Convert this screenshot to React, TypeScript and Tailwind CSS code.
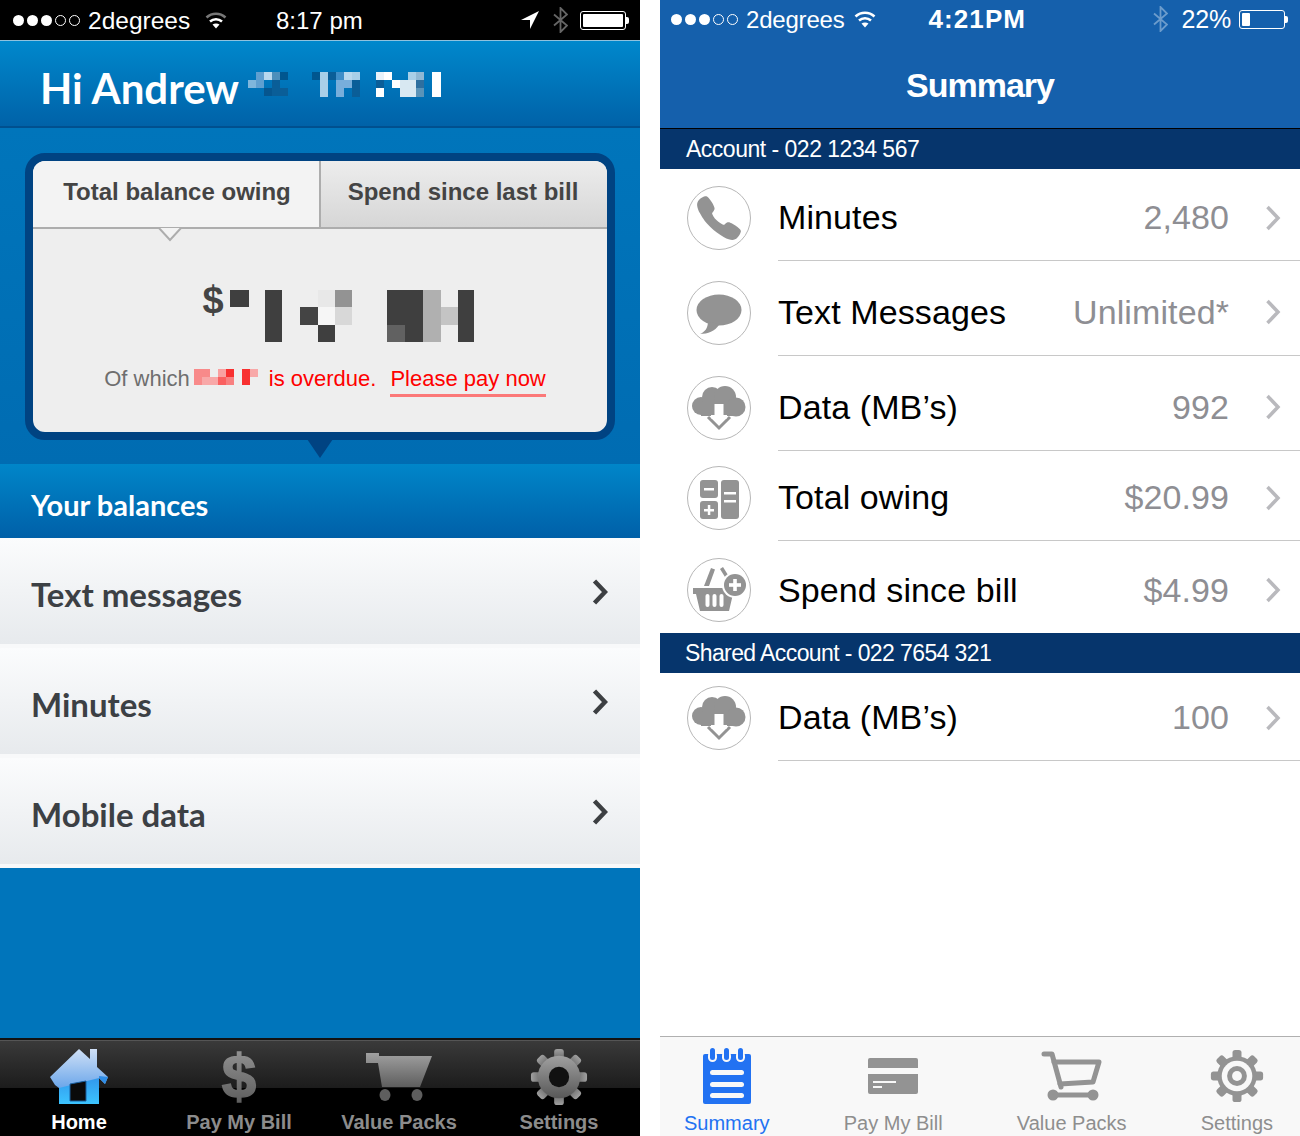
import { IoCall } from 'react-icons/io5'

type Cell = [number, number, number, number, string]

const sans = "font-['Liberation_Sans',Arial,sans-serif]"
const humanist = "font-['Lato',sans-serif]"

const nameMosaic: Cell[] = [
  [0, 8, 8, 8, '#7fb6dc'], [8, 0, 8, 8, '#5f9fd0'], [8, 8, 8, 8, '#3a8cc8'],
  [16, 0, 8, 8, '#b8d8ee'], [24, 0, 8, 8, '#4d8fbb'], [32, 0, 8, 8, '#00568f'], [16, 16, 8, 8, '#06568f'],
  [24, 8, 8, 8, '#0a5e98'], [32, 16, 8, 8, '#0a5e98'], [24, 16, 8, 8, '#0a5e98'], [8, 8, 8, 8, '#5f9fd0'],
  [64, 0, 8, 8, '#00568f'], [72, 0, 8, 25, '#a8cfe8'], [80, 0, 8, 8, '#0a5e98'], [88, 8, 8, 17, '#78aedb'],
  [88, 0, 8, 8, '#3f8ec8'], [96, 0, 8, 8, '#b8d8ee'], [96, 8, 8, 8, '#78aedb'], [104, 0, 8, 8, '#a8cfe8'], [104, 8, 8, 17, '#0a5e98'],
  [128, 0, 8, 8, '#e8f2fa'], [128, 8, 8, 8, '#0a5e98'], [128, 16, 8, 9, '#ffffff'], [136, 0, 8, 8, '#ffffff'],
  [144, 8, 8, 8, '#ffffff'], [152, 8, 8, 17, '#d8e8f2'], [160, 0, 8, 8, '#a8cfe8'], [160, 8, 8, 17, '#d8e8f2'],
  [168, 0, 8, 8, '#8fb8d4'], [168, 8, 8, 8, '#2e6f9f'], [168, 16, 8, 9, '#5a93b8'], [184, 0, 9, 25, '#ffffff'],
]

const balanceMosaic: Cell[] = [
  [0, 0, 19, 17, '#3f3f3f'], [35, 0, 17, 52, '#3f3f3f'], [70, 17, 18, 18, '#444444'],
  [88, 0, 17, 17, '#e8e8e8'], [88, 17, 17, 18, '#f6f6f6'], [88, 35, 17, 17, '#3f3f3f'],
  [105, 0, 17, 17, '#939393'], [105, 17, 17, 18, '#d8d8d8'],
  [157, 0, 36, 35, '#3f3f3f'], [157, 35, 18, 17, '#616161'], [175, 35, 18, 17, '#3f3f3f'],
  [193, 0, 18, 52, '#b0b0b0'], [211, 17, 17, 18, '#c4c4c4'], [228, 0, 16, 52, '#3f3f3f'],
]

const overdueMosaic: Cell[] = [
  [0, 0, 16, 8, '#f88a8a'], [0, 8, 8, 8, '#f88a8a'], [8, 8, 16, 8, '#f8a8a8'], [24, 0, 8, 8, '#f9a0a0'],
  [24, 8, 8, 8, '#fa6060'], [32, 0, 8, 8, '#f83030'], [32, 8, 8, 8, '#f88080'], [48, 0, 8, 16, '#f83030'], [56, 0, 8, 8, '#f8a8a8'],
]

function Mosaic({ cells, w, h, className }: { cells: Cell[]; w: number; h: number; className?: string }) {
  return (
    <svg width={w} height={h} className={className}>
      {cells.map(([x, y, cw, ch, fill], i) => (
        <rect key={i} x={x} y={y} width={cw} height={ch} fill={fill} />
      ))}
    </svg>
  )
}

function SignalDots() {
  return (
    <div className="flex items-center gap-[3px]">
      <span className="w-[11px] h-[11px] rounded-full bg-white" />
      <span className="w-[11px] h-[11px] rounded-full bg-white" />
      <span className="w-[11px] h-[11px] rounded-full bg-white" />
      <span className="w-[11px] h-[11px] rounded-full border border-white" />
      <span className="w-[11px] h-[11px] rounded-full border border-white" />
    </div>
  )
}

function Wifi({ dim }: { dim?: boolean }) {
  return (
    <svg width="22" height="18" viewBox="0 0 22 18" fill="none" strokeWidth="2.6">
      <path d="M1.5 6.5C7 1.5 15 1.5 20.5 6.5" stroke={dim ? '#777777' : '#ffffff'} />
      <path d="M5 10.5C8.500 7.500 13.500 7.500 17 10.500" stroke="#ffffff" />
      <path d="M11 17.500L7.500 13.500C9.500 12 12.500 12 14.500 13.500Z" fill="#ffffff" stroke="none" />
    </svg>
  )
}

function Bluetooth({ color }: { color: string }) {
  return (
    <svg width="15" height="26" viewBox="0 0 15 26" fill="none" stroke={color} strokeWidth="1.800">
      <path d="M1 7.500L14 18.500L7.500 25V1L14 7.500L1 18.500" />
    </svg>
  )
}

function Battery({ level }: { level: number }) {
  return (
    <div className="flex items-center">
      <div className="w-[46px] h-[19px] rounded-[3px] border border-white p-[2px]">
        <div className="h-full bg-white rounded-[1px]" style={{ width: `${level}%` }} />
      </div>
      <div className="w-[3px] h-[7px] bg-white rounded-r-[2px]" />
    </div>
  )
}

function Gear({ fill, ring }: { fill: string; ring?: boolean }) {
  const teeth = [0, 45, 90, 135, 180, 225, 270, 315]
  return (
    <>
      <g fill={fill}>
        {teeth.map((a) => (
          <rect key={a} x="25" y="1" width="10" height="14" rx="3" transform={`rotate(${a} 30 30)`} />
        ))}
        <circle cx="30" cy="30" r="22" />
      </g>
      {ring ? (
        <>
          <circle cx="30" cy="30" r="17" fill="#f8f8f8" />
          <circle cx="30" cy="30" r="11" fill={fill} />
          <circle cx="30" cy="30" r="5.500" fill="#f8f8f8" />
        </>
      ) : (
        <circle cx="30" cy="30" r="10.500" fill="#111111" />
      )}
    </>
  )
}

function HomeTabIcon() {
  return (
    <svg width="60" height="58" viewBox="0 0 60 58">
      <defs>
        <linearGradient id="houseBody" x1="0" y1="0" x2="0" y2="1">
          <stop offset="0" stopColor="#2f8ee8" />
          <stop offset="1" stopColor="#3cc4ff" />
        </linearGradient>
        <linearGradient id="houseRoof" x1="0" y1="0" x2="0" y2="1">
          <stop offset="0" stopColor="#cfe0f6" />
          <stop offset="1" stopColor="#6ba6ea" />
        </linearGradient>
      </defs>
      <path d="M10 24H50V56H10Z" fill="url(#houseBody)" />
      <path d="M1 29L30 1L41 11V1H48V19L59 29L56 36L50 30L10 40L6 37Z" fill="url(#houseRoof)" />
      <path d="M50 28L59 29L56 36L50 30Z" fill="#2f8ee8" />
      <path d="M21 36L37 33V53H21Z" fill="#0a0a0a" stroke="#1b5f9e" />
    </svg>
  )
}

function DollarTabIcon() {
  return (
    <svg width="44" height="76" viewBox="0 0 44 76" className="-my-[8px]">
      <defs>
        <linearGradient id="dollarFill" x1="0" y1="0" x2="0" y2="1">
          <stop offset="0" stopColor="#9a9a9a" />
          <stop offset="1" stopColor="#575757" />
        </linearGradient>
      </defs>
      <text x="22" y="58" textAnchor="middle" fontSize="62" fontWeight="700" fontFamily="Liberation Sans" fill="url(#dollarFill)" stroke="url(#dollarFill)" strokeWidth="1.500">
        $
      </text>
    </svg>
  )
}

function CartTabIcon() {
  return (
    <svg width="68" height="50" viewBox="0 0 68 50">
      <defs>
        <linearGradient id="cartFill" x1="0" y1="0" x2="0" y2="1">
          <stop offset="0" stopColor="#a0a0a0" />
          <stop offset="1" stopColor="#5e5e5e" />
        </linearGradient>
      </defs>
      <path d="M1 1H14V4H67L55 35H17L13 11H1Z" fill="url(#cartFill)" />
      <ellipse cx="20" cy="43" rx="5.500" ry="6" fill="#5e5e5e" />
      <ellipse cx="52" cy="43" rx="5.500" ry="6" fill="#5e5e5e" />
    </svg>
  )
}

function GearTabIcon() {
  return (
    <svg width="58" height="58" viewBox="0 0 60 60">
      <defs>
        <linearGradient id="gearFill" x1="0" y1="0" x2="0" y2="1">
          <stop offset="0" stopColor="#a0a0a0" />
          <stop offset="1" stopColor="#585858" />
        </linearGradient>
      </defs>
      <Gear fill="url(#gearFill)" />
    </svg>
  )
}

function SummaryTabIcon() {
  return (
    <svg width="50" height="58" viewBox="0 0 50 58">
      <rect x="1" y="7" width="48" height="50" rx="2" fill="#2272f2" />
      <g fill="#f8f8f8">
        <rect x="6" y="4" width="9" height="11" rx="4.500" />
        <rect x="20" y="4" width="9" height="11" rx="4.500" />
        <rect x="34" y="4" width="9" height="11" rx="4.500" />
        <rect x="8" y="23" width="34" height="5" rx="2.500" />
        <rect x="8" y="35" width="34" height="5" rx="2.500" />
        <rect x="8" y="46" width="34" height="5" rx="2.500" />
      </g>
      <g fill="#2272f2">
        <rect x="8" y="1" width="5" height="12" rx="2.500" />
        <rect x="22" y="1" width="5" height="12" rx="2.500" />
        <rect x="36" y="1" width="5" height="12" rx="2.500" />
      </g>
    </svg>
  )
}

function BillTabIcon() {
  return (
    <svg width="50" height="36" viewBox="0 0 50 36">
      <rect width="50" height="36" rx="2" fill="#939393" />
      <rect y="10" width="50" height="6" fill="#f8f8f8" />
      <rect x="5" y="23" width="23" height="2" fill="#f8f8f8" />
      <rect x="5" y="28" width="9" height="2" fill="#f8f8f8" />
    </svg>
  )
}

function CartOutlineTabIcon() {
  return (
    <svg width="62" height="50" viewBox="0 0 62 50" fill="none" stroke="#939393" strokeWidth="5" strokeLinecap="round" strokeLinejoin="round">
      <path d="M3 3H11L20 36" />
      <path d="M13 11H58L52 31L19 33" />
      <path d="M12 44H52" />
      <circle cx="12" cy="44" r="3" fill="#939393" />
      <circle cx="52" cy="44" r="3" fill="#939393" />
    </svg>
  )
}

function GearOutlineTabIcon() {
  return (
    <svg width="54" height="56" viewBox="0 0 60 60">
      <Gear fill="#939393" ring />
    </svg>
  )
}

function Chevron({ className, color, width }: { className?: string; color: string; width: number }) {
  return (
    <svg width="16" height="26" viewBox="0 0 16 26" fill="none" stroke={color} strokeWidth={width} className={className}>
      <path d="M2.500 2L13 13L2.500 24" />
    </svg>
  )
}

function IconCircle({ children }: { children: React.ReactNode }) {
  return (
    <svg width="66" height="66" viewBox="0 0 66 66" className="shrink-0">
      <circle cx="33" cy="33" r="31.500" fill="#ffffff" stroke="#b7b7b7" strokeWidth="1" />
      <g fill="#939393">{children}</g>
    </svg>
  )
}

function PhoneIcon() {
  return (
    <div className="relative w-[66px] h-[66px] shrink-0">
      <IconCircle>{null}</IconCircle>
      <IoCall className="absolute left-[8px] top-[8px] text-[#939393]" size={50} />
    </div>
  )
}

function BubbleIcon() {
  return (
    <IconCircle>
      <ellipse cx="33" cy="30" rx="22.500" ry="15.500" />
      <path d="M22 41C22 48 19 52 14 54C22 54 29 51 33 45Z" />
    </IconCircle>
  )
}

function CloudIcon() {
  return (
    <IconCircle>
      <circle cx="15" cy="31" r="9" />
      <circle cx="26" cy="22" r="10" />
      <circle cx="39" cy="22" r="11" />
      <circle cx="50" cy="32" r="9.500" />
      <rect x="15" y="28" width="35" height="13" />
      <path d="M22 42L33 53L44 42" fill="#ffffff" stroke="#939393" strokeWidth="3" />
      <rect x="28.500" y="29" width="9" height="15" fill="#ffffff" />
      <rect x="25" y="40" width="16" height="3.500" fill="#ffffff" />
    </IconCircle>
  )
}

function CalcIcon() {
  return (
    <IconCircle>
      <rect x="14" y="15" width="18" height="18" rx="3" />
      <rect x="14" y="36" width="18" height="18" rx="3" />
      <rect x="35" y="15" width="18" height="39" rx="3" />
      <g fill="#ffffff">
        <rect x="18" y="23" width="10" height="2.500" />
        <rect x="18" y="44" width="10" height="2.500" />
        <rect x="21.800" y="40" width="2.500" height="10" />
        <rect x="38" y="27" width="12" height="2.500" />
        <rect x="38" y="35" width="12" height="2.500" />
      </g>
    </IconCircle>
  )
}

function BasketIcon() {
  return (
    <IconCircle>
      <path d="M7 31H50V37H47L43 54H14L10 37H7Z" />
      <path d="M18 29L25 11L29 12.500L23 29Z" />
      <path d="M34 12L37 10L42 18L39 20Z" />
      <g fill="#ffffff">
        <rect x="19.500" y="37" width="4" height="13" rx="2" />
        <rect x="26.500" y="37" width="4" height="13" rx="2" />
        <rect x="33.500" y="37" width="4" height="13" rx="2" />
      </g>
      <circle cx="49" cy="28" r="13" fill="#ffffff" />
      <circle cx="49" cy="28" r="11" />
      <rect x="43" y="26.200" width="12" height="3.600" fill="#ffffff" />
      <rect x="47.200" y="22" width="3.600" height="12" fill="#ffffff" />
    </IconCircle>
  )
}

function BalanceRow({ label }: { label: string }) {
  return (
    <div className="h-[106px] flex items-center justify-between pl-[31px] pr-[32px] bg-gradient-to-b from-[#fbfcfd] to-[#e7eaed]">
      <span className={`${humanist} text-[33px] font-bold text-[#3c4044] mt-[8px]`}>{label}</span>
      <Chevron color="#3c3f42" width={4.500} className="mt-[2px]" />
    </div>
  )
}

function SummaryRow({
  icon,
  label,
  value,
  height,
  offset,
  last,
}: {
  icon: React.ReactNode
  label: string
  value: string
  height: string
  offset: string
  last?: boolean
}) {
  return (
    <div className={`flex items-stretch ${height}`}>
      <div className={`w-[118px] pl-[26px] flex items-center ${offset}`}>{icon}</div>
      <div className={`flex-1 flex items-center pr-[19px] ${offset} ${last ? '' : 'border-b border-[#c8c8c8]'}`}>
        <span className="flex-1 text-[34px] text-black tracking-[0.1px]">{label}</span>
        <span className="text-[34px] text-[#8e8e93] tracking-[0.1px]">{value}</span>
        <Chevron color="#b9b9bd" width={3.500} className="ml-[36px]" />
      </div>
    </div>
  )
}

function LeftTab({ icon, label, active }: { icon: React.ReactNode; label: string; active?: boolean }) {
  return (
    <div className="w-[160px] flex flex-col items-center">
      <div className="h-[60px] flex items-center justify-center">{icon}</div>
      <span className={`mt-[3px] text-[20px] font-bold leading-[24px] ${active ? 'text-white' : 'text-[#8c8c8c]'}`}>{label}</span>
    </div>
  )
}

function RightTab({ icon, label, active }: { icon: React.ReactNode; label: string; active?: boolean }) {
  return (
    <div className="flex flex-col items-center">
      <div className="h-[62px] flex items-center justify-center">{icon}</div>
      <span className={`mt-[4px] text-[20px] leading-[24px] ${active ? 'text-[#2272f2]' : 'text-[#8e8e8e]'}`}>{label}</span>
    </div>
  )
}

function OldApp() {
  return (
    <div className={`w-[640px] h-[1136px] flex flex-col bg-[#0075bb] ${sans}`}>
      {/* Status bar */}
      <div className="h-[41px] bg-black border-b border-[#8fc2de] flex items-center pl-[13px] pr-[11px] text-white text-[24.500px]">
        <SignalDots />
        <span className="ml-[8px] w-[117px] mt-[2px]">2degrees</span>
        <Wifi dim />
        <span className="ml-[49px] flex-1 mt-[2px] text-[24px]">8:17 pm</span>
        <svg width="20" height="20" viewBox="0 0 20 20" className="mr-[13px]">
          <path d="M19 1L1 10H10V19Z" fill="#ffffff" />
        </svg>
        <Bluetooth color="#666666" />
        <div className="ml-[12px]">
          <Battery level={100} />
        </div>
      </div>

      {/* Greeting */}
      <div className="h-[87px] flex items-center pl-[40px] bg-gradient-to-b from-[#0088cc] to-[#0062a8] border-b-2 border-[#00508f]">
        <span className={`${humanist} text-[42px] font-bold text-white leading-none mt-[9px]`}>Hi Andrew</span>
        <Mosaic cells={nameMosaic} w={194} h={25} className="ml-[9px] mt-[1px]" />
      </div>

      {/* Balance card */}
      <div className="relative h-[336px] px-[25px] pt-[25px] bg-gradient-to-b from-[#0075bb] to-[#006cb2]">
        <div className="h-[287px] rounded-[20px] border-8 border-[#004382] bg-[#eeeeee] overflow-hidden flex flex-col">
          <div className="h-[68px] flex border-b-2 border-[#adadad]">
            <div className="w-[288px] flex items-center justify-center bg-[#f3f3f3] border-r-2 border-[#adadad] pb-[4px] pl-[2px]">
              <span className="text-[24px] font-bold text-[#444444]">Total balance owing</span>
            </div>
            <div className="flex-1 flex items-center justify-center bg-gradient-to-b from-[#ededed] to-[#d6d6d6] pb-[4px] pr-[2px]">
              <span className="text-[24px] font-bold text-[#444444]">Spend since last bill</span>
            </div>
          </div>
          <div className="flex justify-center mt-[61px] pl-[36px]">
            <span className="text-[38px] font-bold text-[#444444] leading-[38px] -mt-[9px] mr-[6px]">$</span>
            <Mosaic cells={balanceMosaic} w={244} h={52} />
          </div>
          <div className="flex items-center justify-center mt-[20px] text-[22px] leading-[32px] pl-[10px]">
            <span className="text-[#6e6e6e]">Of which</span>
            <Mosaic cells={overdueMosaic} w={64} h={16} className="ml-[4px] -mt-[4px]" />
            <span className="ml-[11px] text-[#ff0000]">is overdue.</span>
            <span className="ml-[14px] text-[#ff0000] border-b-[3px] border-[#fb7878] leading-[30px] translate-y-[2px]">Please pay now</span>
          </div>
        </div>
        <svg width="34" height="16" viewBox="0 0 34 16" className="absolute left-[153px] top-[99px]">
          <path d="M0 1H6L17 13L28 1H34" fill="#f3f3f3" stroke="#adadad" strokeWidth="2" />
        </svg>
        <svg width="26" height="19" viewBox="0 0 26 19" className="absolute left-[307px] top-[311px]">
          <path d="M0 0H26L13 19Z" fill="#004382" />
        </svg>
      </div>

      {/* Balances */}
      <div className="h-[74px] flex items-center pl-[31px] pt-[8px] bg-gradient-to-b from-[#0086c9] to-[#0060a8]">
        <span className={`${humanist} text-[29px] font-bold text-white`}>Your balances</span>
      </div>
      <BalanceRow label="Text messages" />
      <div className="h-[4px] bg-[#f8f9fa]" />
      <BalanceRow label="Minutes" />
      <div className="h-[4px] bg-[#f8f9fa]" />
      <BalanceRow label="Mobile data" />
      <div className="h-[4px] bg-[#f8f9fa]" />
      <div className="flex-1" />

      {/* Tab bar */}
      <div className="relative h-[98px] flex bg-black border-t-2 border-[#121212] overflow-hidden">
        <div className="absolute inset-x-0 top-0 h-[48px] bg-gradient-to-b from-[#3a3a3a] to-[#1c1c1c] border-t border-[#555555]" />
        <div className="relative flex pt-[7px] -ml-[1px]">
          <LeftTab active label="Home" icon={<HomeTabIcon />} />
          <LeftTab label="Pay My Bill" icon={<DollarTabIcon />} />
          <LeftTab label="Value Packs" icon={<CartTabIcon />} />
          <LeftTab label="Settings" icon={<GearTabIcon />} />
        </div>
      </div>
    </div>
  )
}

function NewApp() {
  return (
    <div className={`w-[640px] h-[1136px] flex flex-col bg-white ${sans}`}>
      {/* Header */}
      <div className="h-[128px] bg-[#1560ac] text-white">
        <div className="h-[38px] flex items-center pl-[11px] pr-[12px] text-[24px] tracking-[-0.2px]">
          <SignalDots />
          <span className="ml-[8px] mt-[1px] font-medium">2degrees</span>
          <div className="ml-[10px]">
            <Wifi />
          </div>
          <span className="ml-[52px] mt-[1px] flex-1 text-[26px] font-bold tracking-[1.100px]">4:21PM</span>
          <Bluetooth color="#6c9ccc" />
          <span className="ml-[14px] mt-[1px] text-[25px] font-medium">22%</span>
          <div className="ml-[8px]">
            <Battery level={20} />
          </div>
        </div>
        <div className="h-[90px] flex items-center justify-center pt-[4px]">
          <span className="text-[34px] font-bold tracking-[-1px]">Summary</span>
        </div>
      </div>

      <div className="h-[41px] flex items-center pl-[26px] bg-[#06356c] border-t border-black text-white text-[23px] tracking-[-0.5px]">
        Account - 022 1234 567
      </div>
      <SummaryRow height="h-[92px]" offset="pt-[6px]" icon={<PhoneIcon />} label="Minutes" value="2,480" />
      <SummaryRow height="h-[95px]" offset="pt-[8px]" icon={<BubbleIcon />} label="Text Messages" value="Unlimited*" />
      <SummaryRow height="h-[95px]" offset="pt-[8px]" icon={<CloudIcon />} label="Data (MB’s)" value="992" />
      <SummaryRow height="h-[90px]" offset="pt-[4px]" icon={<CalcIcon />} label="Total owing" value="$20.99" />
      <SummaryRow height="h-[92px]" offset="pt-[6px]" icon={<BasketIcon />} label="Spend since bill" value="$4.99" last />
      <div className="h-[40px] flex items-center pl-[25px] bg-[#06356c] text-white text-[23px] tracking-[-0.6px]">
        Shared Account - 022 7654 321
      </div>
      <SummaryRow height="h-[88px]" offset="pt-[2px]" icon={<CloudIcon />} label="Data (MB’s)" value="100" />
      <div className="flex-1" />

      {/* Tab bar */}
      <div className="h-[100px] flex justify-between pl-[24px] pr-[27px] bg-[#f8f8f8] border-t border-[#b0b0b0] pt-[8px]">
        <RightTab active label="Summary" icon={<SummaryTabIcon />} />
        <RightTab label="Pay My Bill" icon={<BillTabIcon />} />
        <RightTab label="Value Packs" icon={<CartOutlineTabIcon />} />
        <RightTab label="Settings" icon={<GearOutlineTabIcon />} />
      </div>
    </div>
  )
}

export default function App() {
  return (
    <div className="w-[1300px] h-[1136px] flex justify-between bg-white overflow-hidden">
      <OldApp />
      <NewApp />
    </div>
  )
}
